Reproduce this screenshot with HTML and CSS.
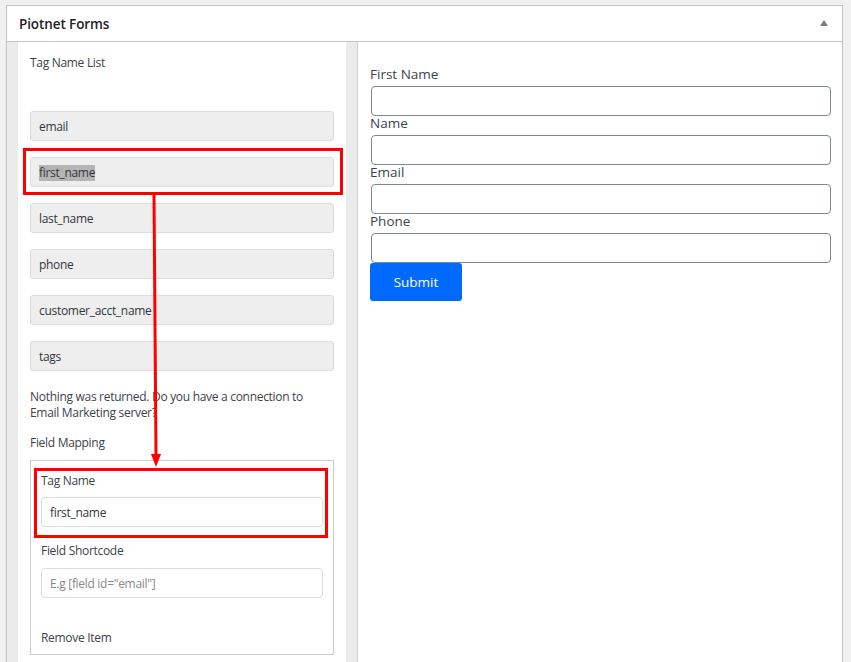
FILE: index.html
```html
<!DOCTYPE html>
<html>
<head>
<meta charset="utf-8">
<link rel="stylesheet" href="styles.css">
</head>
<body>
<div class="page">
  <div class="panel">
    <div class="panel-head">
      <span class="panel-title">Piotnet Forms</span>
      <svg class="toggle" width="8" height="6" viewBox="0 0 8 6"><path d="M4 0 L8 6 L0 6 Z" fill="#787c82"/></svg>
    </div>
    <div class="panel-body">
      <div class="left-wrap">
        <div class="left-col">
          <div class="title">Tag Name List</div>
          <div class="tags">
            <div class="tag">email</div>
            <div class="tag"><span class="sel">first_name</span></div>
            <div class="tag">last_name</div>
            <div class="tag">phone</div>
            <div class="tag">customer_acct_name</div>
            <div class="tag">tags</div>
          </div>
          <p class="note">Nothing was returned. Do you have a connection to Email Marketing server?</p>
          <div class="section">Field Mapping</div>
          <div class="mapping">
            <div class="m-label">Tag Name</div>
            <div class="m-input">first_name</div>
            <div class="m-label m-gap">Field Shortcode</div>
            <div class="m-input placeholder">E.g [field id="email"]</div>
            <div class="m-remove">Remove Item</div>
          </div>
        </div>
      </div>
      <div class="right-col">
        <div class="f-label">First Name</div>
        <div class="f-input"></div>
        <div class="f-label">Name</div>
        <div class="f-input"></div>
        <div class="f-label">Email</div>
        <div class="f-input"></div>
        <div class="f-label">Phone</div>
        <div class="f-input"></div>
        <button class="submit">Submit</button>
      </div>
    </div>
  </div>
  <svg class="overlay" width="851" height="662" viewBox="0 0 851 662">
    <rect x="24.5" y="149.5" width="317" height="44" fill="none" stroke="#ff0000" stroke-width="3"/>
    <rect x="35.5" y="469.5" width="291" height="67" fill="none" stroke="#ff0000" stroke-width="3"/>
    <line x1="154" y1="195" x2="156" y2="455" stroke="#ff0000" stroke-width="3"/>
    <path d="M151 454 L161 454 L156 467 Z" fill="#ff0000"/>
  </svg>
</div>
</body>
</html>
```
FILE: styles.css
```css
* { box-sizing: border-box; }
html, body { margin: 0; padding: 0; }
body {
  background: #f0f0f1;
  font-family: "Open Sans", "Noto Sans", sans-serif;
  color: #3c434a;
  width: 851px;
  height: 662px;
  overflow: hidden;
}
.page {
  position: relative;
  width: 851px;
  height: 662px;
  padding: 5px 8px 0 6px;
}
.panel {
  background: #fff;
  border: 1px solid #c3c4c7;
  border-bottom: none;
  height: 657px;
  display: flex;
  flex-direction: column;
}
.panel-head {
  height: 36px;
  border-bottom: 1px solid #c3c4c7;
  display: flex;
  align-items: center;
  justify-content: space-between;
  padding: 0 14px 0 12px;
}
.panel-title {
  font-size: 13.5px;
  font-weight: 600;
  color: #1d2327;
  letter-spacing: -0.1px;
}
.toggle { margin-top: -1px; }
.panel-body {
  flex: 1;
  display: flex;
  min-height: 0;
}
.left-wrap {
  background: #ebebeb;
  padding: 0 11px;
  border-right: 1px solid #d0d0d0;
  display: flex;
}
.left-col {
  width: 328px;
  background: #fff;
  padding: 11px 12px 0 12px;
  font-size: 12px;
  line-height: 16px;
  letter-spacing: -0.3px;
}
.title { height: 18px; line-height: 18px; padding-top: 1px; }
.tags {
  margin-top: 40px;
  display: flex;
  flex-direction: column;
  gap: 16px;
}
.tag {
  height: 30px;
  background: #eeeeee;
  border: 1px solid #dddddd;
  border-radius: 3px;
  padding: 1px 8px 0 8px;
  display: flex;
  align-items: center;
  color: #32373c;
}
.sel { background: #b4b4b4; }
.note { margin: 18px 0 0 0; }
.section { margin-top: 14px; }
.mapping {
  margin-top: 9px;
  border: 1px solid #cccccc;
  padding: 12px 10px 8px 10px;
}
.m-input {
  margin-top: 8px;
  height: 30px;
  border: 1px solid #dddddd;
  border-radius: 4px;
  padding: 1px 8px 0 8px;
  display: flex;
  align-items: center;
  color: #32373c;
}
.m-gap { margin-top: 16px; }
.m-input.placeholder { margin-top: 9px; color: #8a8a8a; }
.m-remove { margin-top: 32px; }
.right-col {
  flex: 1;
  padding: 25px 11px 0 12px;
  font-size: 13.5px;
}
.f-label {
  height: 19px;
  line-height: 14px;
  color: #3c434a;
}
.f-input {
  margin-left: 1px;
  height: 30px;
  border: 1px solid #7e8993;
  border-radius: 4px;
}
.submit {
  display: block;
  width: 92px;
  height: 38px;
  background: #006aff;
  color: #fff;
  border: none;
  border-radius: 3px;
  font-family: "Open Sans", "Noto Sans", sans-serif;
  font-size: 13.5px;
  padding: 0;
}
.overlay {
  position: absolute;
  left: 0;
  top: 0;
  pointer-events: none;
}
```
